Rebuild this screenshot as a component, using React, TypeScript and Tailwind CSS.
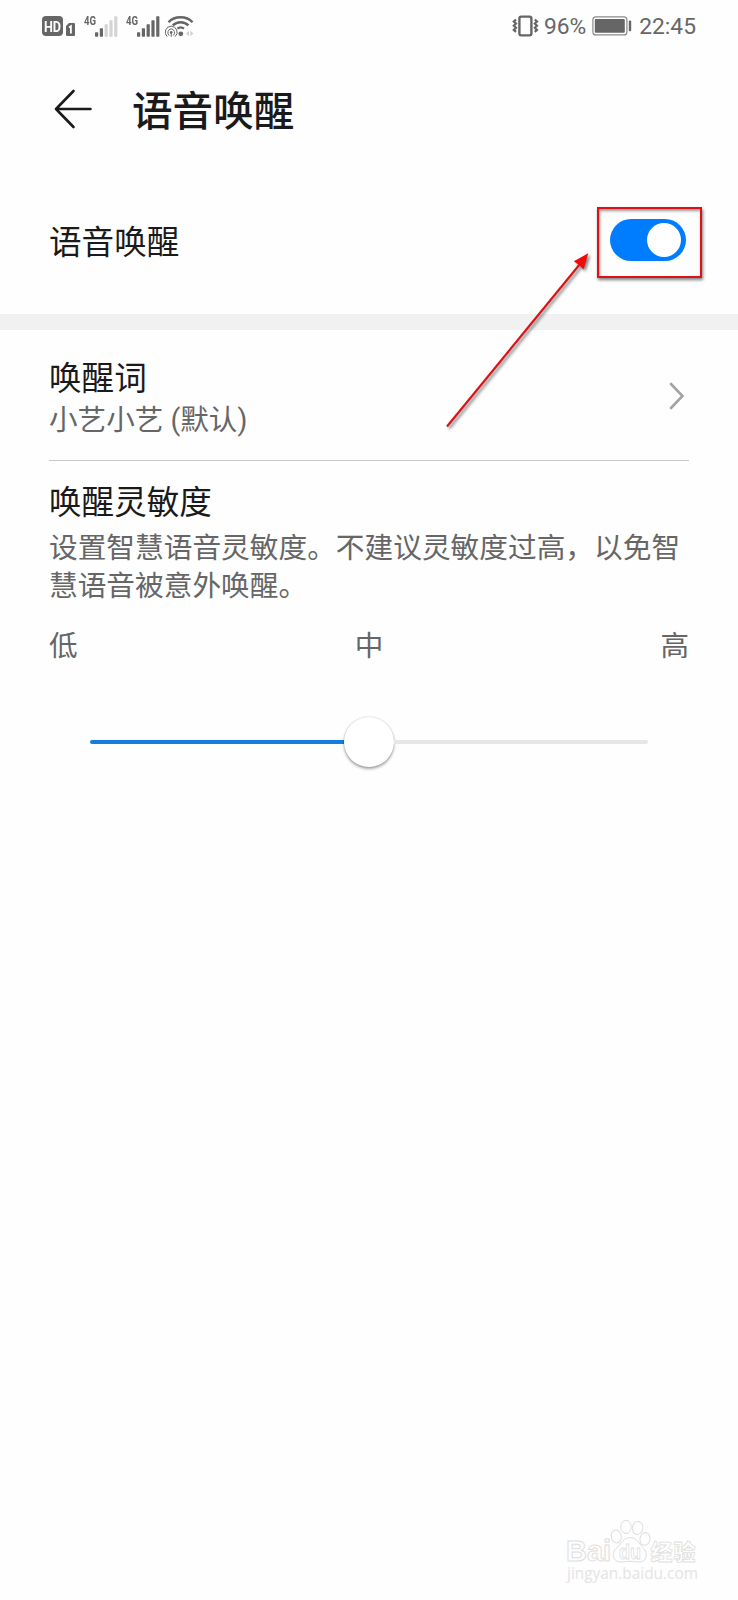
const SANS = "font-['Roboto','Noto_Sans_CJK_SC',sans-serif]"

const LEVELS = ['低', '中', '高']

function SignalBars({ faded = false }: { faded?: boolean }) {
  const bars = [
    { x: 0, h: 4.5 },
    { x: 4.8, h: 8.5 },
    { x: 9.6, h: 12.5 },
    { x: 14.4, h: 16.5 },
    { x: 19.2, h: 20.5 },
  ]
  return (
    <svg className="w-[23px] h-[21px]" viewBox="0 0 23 21">
      {bars.map((b, i) => (
        <rect
          key={b.x}
          x={b.x}
          y={20.7 - b.h}
          width="3.2"
          height={b.h}
          rx="0.6"
          fill={faded && i > 1 ? '#d4d4d4' : '#666'}
        />
      ))}
    </svg>
  )
}

function StatusBar() {
  return (
    <header className="h-[52px] pl-[42px] pr-[42px] flex items-center justify-between text-[#666]">
      <div className="flex items-start h-[21px]">
        {/* HD + SIM slot */}
        <div className="w-[21px] h-[20px] rounded-[4px] bg-[#666] flex items-center justify-center text-[14px] leading-none font-bold text-white font-['Roboto',sans-serif]">
          <span className="mt-[3px] scale-x-90">HD</span>
        </div>
        <svg className="w-[9px] h-[13px] ml-[3px] mt-[7px]" viewBox="0 0 9 13">
          <path d="M3 0H8a1 1 0 0 1 1 1V12a1 1 0 0 1-1 1H1a1 1 0 0 1-1-1V3Z" fill="#666" />
          <path d="M3 4.4 4.9 3.2V10.4" fill="none" stroke="#fff" strokeWidth="1.8" />
        </svg>
        <span className="ml-[9px] w-[11px] text-[13px] leading-[10px] font-bold font-['Roboto',sans-serif]">
          <span className="inline-block origin-left scale-x-[.74]">4G</span>
        </span>
        <SignalBars faded />
        <span className="ml-[8px] w-[11px] text-[13px] leading-[10px] font-bold font-['Roboto',sans-serif]">
          <span className="inline-block origin-left scale-x-[.74]">4G</span>
        </span>
        <SignalBars />

        {/* Wi-Fi with hotspot */}
        <svg className="w-[30px] h-[22px] ml-[5px]" viewBox="0 0 30 22" fill="none" stroke="#666">
          <path d="M3.5 6.2C9.5-.4 21.5-.4 27.5 6.2" strokeWidth="2.4" />
          <path d="M7.8 9.4C12 5.2 19.2 5.2 23.4 9.4" strokeWidth="2.4" />
          <path d="M12.4 12.6C14.4 11 17 11 19 12.6" strokeWidth="2.2" />
          <circle cx="15.8" cy="17.8" r="2.4" fill="#666" stroke="none" />
          <circle cx="6.2" cy="16.4" r="1.3" fill="#666" stroke="none" />
          <path d="M4.2 19.6A3.9 3.9 0 0 1 6.2 12.8 3.9 3.9 0 0 1 8.2 19.6M6.2 17V20.8" strokeWidth="1" />
          <path d="M2.2 20.6A6 6 0 0 1 6.2 10.2 6 6 0 0 1 10.2 20.6" strokeWidth="1" />
          <path d="M24 14.8 21 17.6 24 20.4ZM25.4 14.8 28.4 17.6 25.4 20.4Z" fill="#d0d0d0" stroke="none" />
        </svg>
      </div>

      <div className="flex items-center text-[22.8px] leading-[26px] font-['Roboto',sans-serif]">
        <svg className="w-[28px] h-[22px] -mt-px" viewBox="0 0 28 22" fill="none" stroke="#666">
          <rect x="7.4" y="1.6" width="12" height="18.8" rx="1.8" strokeWidth="2.4" />
          <path d="M4 4.5 1.8 6.5 4 8.5 1.8 10.7 4 12.7 1.8 14.9 4 16.9" strokeWidth="2.2" />
          <path d="M22.8 4.5 25 6.5 22.8 8.5 25 10.7 22.8 12.7 25 14.9 22.8 16.9" strokeWidth="2.2" />
        </svg>
        <span className="ml-[4px] mt-px">96%</span>
        <svg className="w-[40px] h-[20px] ml-[6px] -mt-px" viewBox="0 0 40 20">
          <rect x=".9" y=".9" width="34" height="18" rx="3" fill="none" stroke="#8a8a8a" strokeWidth="1.2" />
          <rect x="2.8" y="3" width="30" height="13.8" rx="1" fill="#666" />
          <rect x="36.8" y="4.6" width="2.4" height="10.6" rx="1" fill="#666" />
        </svg>
        <span className="ml-[7px] mt-px">22:45</span>
      </div>
    </header>
  )
}

function Toggle() {
  return (
    <div className="relative">
      <button className="w-[76px] h-[42px] rounded-full bg-[#007dff] p-1 pr-[5px] flex items-center justify-end">
        <span className="w-[34px] h-[34px] rounded-full bg-white" />
      </button>
      {/* Highlight frame and pointer */}
      <div className="absolute -left-[13px] -top-[12px] w-[105px] h-[71px] border-2 border-[#dc1216] shadow-[1px_2px_3px_rgba(0,0,0,.5),inset_1px_2px_3px_rgba(0,0,0,.4)] pointer-events-none" />
      <svg
        className="absolute -left-[170px] top-[30px] w-[160px] h-[186px] pointer-events-none drop-shadow-[2px_2px_1.5px_rgba(0,0,0,.5)]"
        viewBox="0 0 160 186"
      >
        <path d="M7 177.5 140 15" stroke="#dc1216" strokeWidth="2.2" />
        <path d="M148.3 4.3 143.5 20.5 139.2 16 133.8 12.2Z" fill="#f00a0a" />
      </svg>
    </div>
  )
}

function Watermark() {
  return (
    <svg
      className="absolute left-[560px] top-[1512px] w-[150px] h-[80px] pointer-events-none"
      viewBox="0 0 150 80"
      fill="#fefefe"
      stroke="#dedede"
      strokeWidth="1"
    >
      <text x="6" y="49" fontSize="29" fontWeight="700" textLength="45" lengthAdjust="spacingAndGlyphs" fontFamily="Liberation Sans, sans-serif">
        Bai
      </text>
      <ellipse cx="56.3" cy="24.5" rx="5" ry="6.6" transform="rotate(-10 56.3 24.5)" />
      <ellipse cx="66" cy="15" rx="5.2" ry="6.6" />
      <ellipse cx="77.6" cy="16" rx="5.2" ry="6.6" transform="rotate(10 77.6 16)" />
      <ellipse cx="85" cy="27" rx="5" ry="6.4" transform="rotate(12 85 27)" />
      <path d="M70.5 25.5C77 25.5 79 32 83.5 36.5 88 41 87.5 50 79 50 75 50 74 49.3 70 49.3 66 49.3 64 50 61 50 52 50 51.5 41 56 36.5 61 32 64 25.5 70.5 25.5Z" />
      <text x="59" y="46.5" fontSize="20" fontWeight="700" textLength="22" lengthAdjust="spacingAndGlyphs" strokeWidth=".8" fontFamily="Liberation Sans, sans-serif">
        du
      </text>
      <text x="90.5" y="47.5" fontSize="22" fontWeight="900" textLength="45" strokeWidth=".8" fontFamily="Noto Sans CJK SC, sans-serif">
        经验
      </text>
      <text x="7" y="67" fontSize="15.5" fill="#e4e4e4" stroke="none" textLength="131" lengthAdjust="spacingAndGlyphs" fontFamily="Open Sans, sans-serif">
        jingyan.baidu.com
      </text>
    </svg>
  )
}

export default function App() {
  return (
    <main className={`relative w-[738px] h-[1600px] overflow-hidden bg-[#fefefe] text-[#1a1a1a] ${SANS}`}>
      <StatusBar />

      <div className="h-[114px] pl-[54px] flex items-center">
        <svg className="w-[39px] h-[40px]" viewBox="0 0 39 40" fill="none" stroke="#1a1a1a" strokeWidth="2.6" strokeLinecap="round" strokeLinejoin="round">
          <path d="M19.5 2 2 20 19.5 38M2 20H36.5" />
        </svg>
        <h1 className="ml-[39px] mt-[5px] text-[40.6px] leading-[56px] font-medium">语音唤醒</h1>
      </div>

      <div className="h-[148px] pl-[49px] pr-[52px] flex items-center justify-between">
        <span className="mt-[5px] text-[32.6px] leading-[44px]">语音唤醒</span>
        <Toggle />
      </div>

      <div className="h-4 bg-[#f1f1f1]" />

      <section className="px-[49px]">
        <div className="h-[131px] border-b border-[#c8c8c8] flex items-center justify-between">
          <div className="pt-[8px]">
            <h2 className="text-[32.6px] leading-[42px]">唤醒词</h2>
            <p className="text-[28.6px] leading-[40px] text-[#666]">小艺小艺 (默认)</p>
          </div>
          <svg className="w-[16px] h-[28px] mt-px mr-[4px]" viewBox="0 0 16 28" fill="none" stroke="#a3a3a3" strokeWidth="2.6" strokeLinecap="round">
            <path d="M2 2 13.5 14 2 26" />
          </svg>
        </div>

        <h2 className="mt-[21px] text-[32.6px] leading-[42px]">唤醒灵敏度</h2>
        <p className="mt-[6px] text-[28.7px] leading-[37.6px] text-[#666] whitespace-nowrap">
          设置智慧语音灵敏度。不建议灵敏度过高，以免智
          <br />
          慧语音被意外唤醒。
        </p>

        <div className="mt-[21px] flex justify-between text-[28.6px] leading-[40px] text-[#666]">
          {LEVELS.map(level => (
            <span key={level}>{level}</span>
          ))}
        </div>

        {/* Sensitivity slider */}
        <div className="mt-[51px] mx-[41px] h-[50px] flex items-center">
          <div className="flex-1 h-1 rounded-l-full bg-[#147de0]" />
          <div className="w-[50px] h-[50px] rounded-full bg-white shadow-[0_2px_3px_rgba(0,0,0,.35),0_0_2px_rgba(0,0,0,.2)]" />
          <div className="flex-1 h-1 rounded-r-full bg-[#e6e6e6]" />
        </div>
      </section>

      <Watermark />
    </main>
  )
}
